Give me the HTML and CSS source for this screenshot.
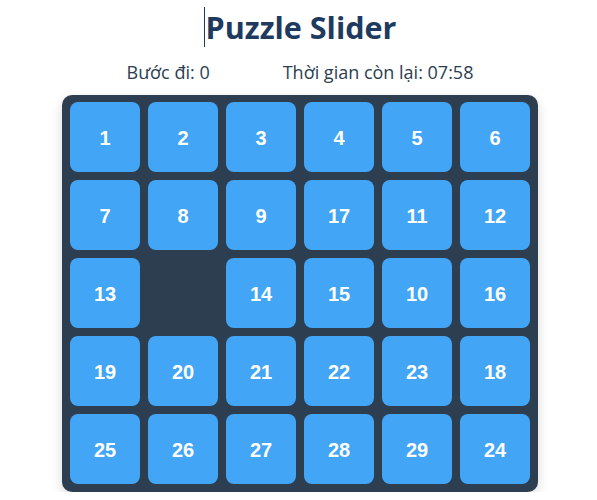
FILE: index.html
```html
<!DOCTYPE html>
<html lang="vi">
<head>
<meta charset="utf-8">
<title>Puzzle Slider</title>
<link rel="stylesheet" href="styles.css">
</head>
<body>
<div class="app">
  <h1 class="title"><span class="caret"></span>Puzzle Slider</h1>
  <div class="stats">
    <span>Bước đi: 0</span>
    <span>Thời gian còn lại: 07:58</span>
  </div>
  <div class="board">
    <div class="tile">1</div><div class="tile">2</div><div class="tile">3</div><div class="tile">4</div><div class="tile">5</div><div class="tile">6</div>
    <div class="tile">7</div><div class="tile">8</div><div class="tile">9</div><div class="tile">17</div><div class="tile">11</div><div class="tile">12</div>
    <div class="tile">13</div><div class="tile empty"></div><div class="tile">14</div><div class="tile">15</div><div class="tile">10</div><div class="tile">16</div>
    <div class="tile">19</div><div class="tile">20</div><div class="tile">21</div><div class="tile">22</div><div class="tile">23</div><div class="tile">18</div>
    <div class="tile">25</div><div class="tile">26</div><div class="tile">27</div><div class="tile">28</div><div class="tile">29</div><div class="tile">24</div>
  </div>
</div>
</body>
</html>
```

FILE: styles.css
```css
html, body {
  margin: 0;
  padding: 0;
  background: #ffffff;
}
body {
  font-family: "Open Sans", "Noto Sans", sans-serif;
}
.app {
  display: flex;
  flex-direction: column;
  align-items: center;
  padding-top: 7px;
  padding-left: 3px;
}
.title {
  margin: 0;
  font-size: 30.5px;
  line-height: 40px;
  font-weight: 700;
  color: #1e3a5f;
  display: flex;
  align-items: stretch;
}
.caret {
  width: 1px;
  background: #1e3a5f;
  margin-right: 1px;
}
.stats {
  display: flex;
  gap: 73px;
  margin-top: 12px;
  font-size: 18px;
  line-height: 26px;
  color: #2c3e50;
}
.board {
  margin-top: 10px;
  display: grid;
  grid-template-columns: repeat(6, 70px);
  grid-auto-rows: 70px;
  gap: 8px;
  padding: 7px 8px 8px;
  background: #2c3e50;
  border-radius: 10px;
  box-shadow: 0 4px 12px rgba(0, 0, 0, 0.15);
}
.tile {
  background: #42a5f5;
  border-radius: 8px;
  display: flex;
  align-items: center;
  justify-content: center;
  padding-top: 3px;
  box-sizing: border-box;
  color: #ffffff;
  font-family: "Liberation Sans", Arial, sans-serif;
  font-weight: 700;
  font-size: 20px;
}
.tile.empty {
  background: transparent;
}
```
